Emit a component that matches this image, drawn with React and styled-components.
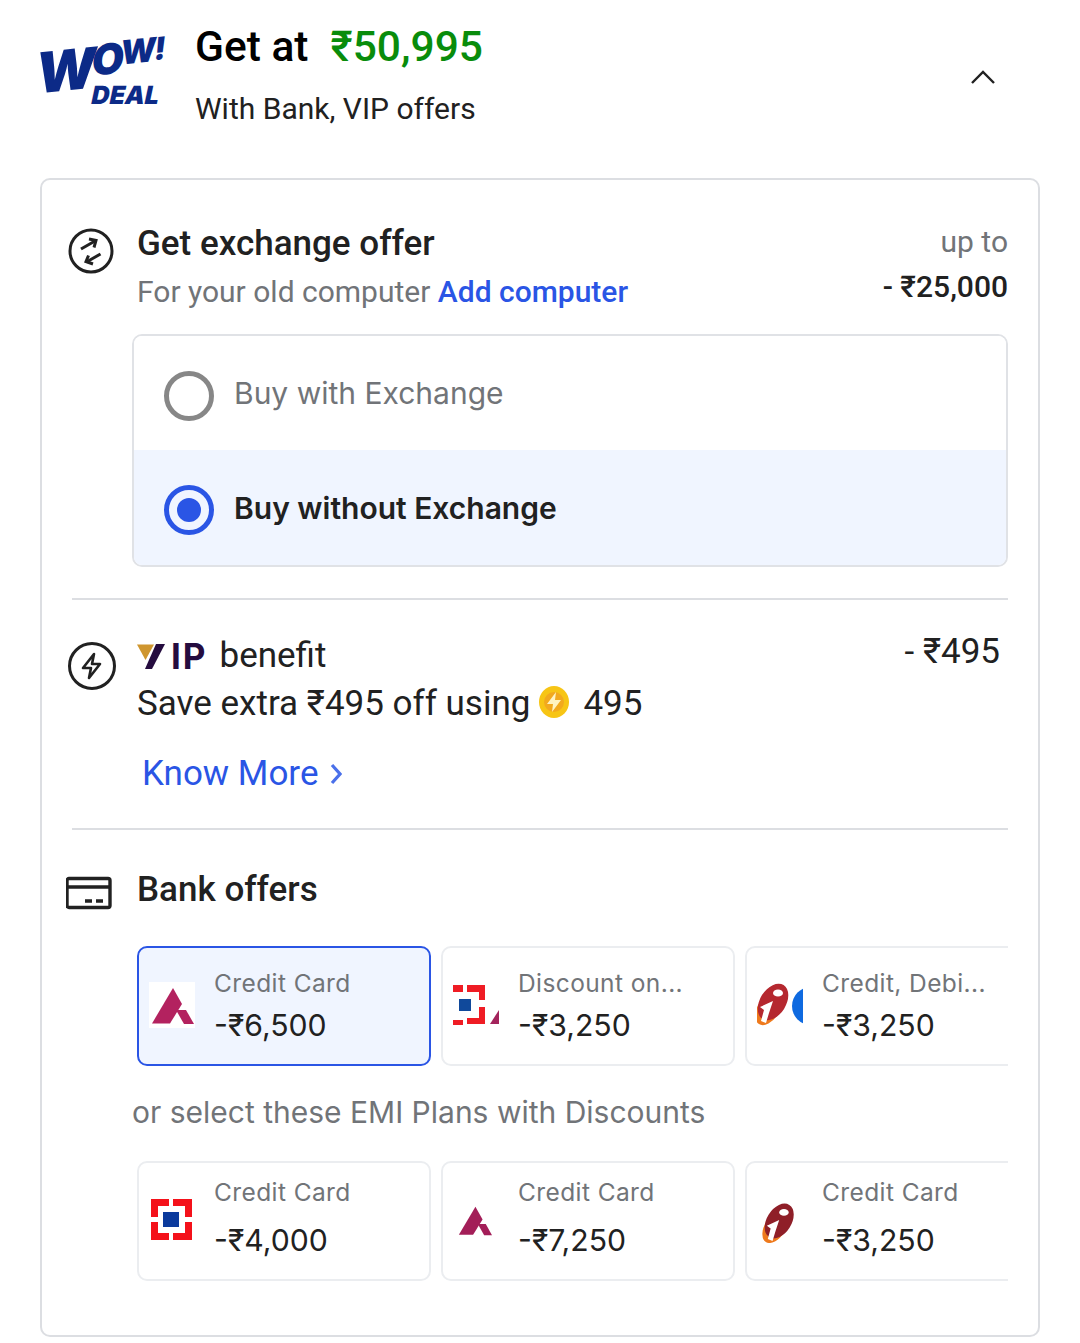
import styled, { createGlobalStyle } from "styled-components";

const Global = createGlobalStyle`
  body {
    margin: 0;
    background: #fff;
    font-family: Roboto, "Liberation Sans", sans-serif;
  }
`;

const Page = styled.div`
  width: 1080px;
  height: 1343px;
  overflow: hidden;
`;

const Header = styled.header`
  height: 178px;
  display: flex;
  padding-left: 40px;
  padding-right: 84px;
  box-sizing: border-box;
`;

const Logo = styled.div`
  width: 155px;
  flex: none;
  padding-top: 36px;
  color: #0c2a87;
  font-family: Inter, sans-serif;
  font-weight: 900;
`;

const LogoWow = styled.div`
  display: flex;
  align-items: flex-start;
  height: 50px;
  transform: rotate(-6deg) skewX(-12deg);
  transform-origin: left top;
  margin-top: 9px;
`;

const LogoChar = styled.span`
  font-size: ${(p) => p.$size}px;
  line-height: ${(p) => p.$size}px;
  margin-right: ${(p) => p.$gap}px;
`;

const LogoDeal = styled.div`
  font-size: 25px;
  line-height: 24px;
  margin-top: -12px;
  margin-left: 52px;
  transform: skewX(-12deg);
`;

const HeaderText = styled.div`
  flex: 1;
  padding-top: 23px;
`;

const Title = styled.div`
  display: flex;
  gap: 22px;
  font-size: 42.5px;
  line-height: 48px;
  font-weight: 500;
  color: #000;
`;

const Price = styled.span`
  color: #098c0b;
`;

const Sub = styled.div`
  margin-top: 20px;
  font-size: 30px;
  line-height: 36px;
  color: #212121;
`;

const Collapse = styled.div`
  padding-top: 69px;
  color: #212121;
`;

const Panel = styled.section`
  width: 1000px;
  height: 1159px;
  margin-left: 40px;
  box-sizing: border-box;
  border: 2px solid #dcdee2;
  border-radius: 10px;
  padding: 0 30px;
`;

const Row = styled.div`
  display: flex;
  padding-top: ${(p) => p.$top}px;
`;

const IconCell = styled.div`
  width: 65px;
  flex: none;
  padding-top: ${(p) => p.$top || 0}px;
  margin-left: ${(p) => p.$left || -5}px;
  margin-right: ${(p) => -(p.$left || -5)}px;
  color: #212121;
`;

const Main = styled.div`
  flex: 1;
`;

const Heading = styled.div`
  font-size: 35px;
  line-height: 44px;
  font-weight: 500;
  color: #212121;
`;

const SubLine = styled.div`
  font-size: 30px;
  line-height: 40px;
  margin-top: 6px;
  color: #717478;
`;

const Link = styled.span`
  color: #2a55e5;
  font-weight: 500;
`;

const Side = styled.div`
  text-align: right;
  flex: none;
`;

const UpTo = styled.div`
  font-size: 30px;
  line-height: 40px;
  color: #717478;
`;

const SideValue = styled.div`
  font-size: 30px;
  line-height: 40px;
  margin-top: 5px;
  font-weight: 500;
  color: #212121;
`;

const Options = styled.div`
  margin: 22px 0 31px 60px;
  border: 2px solid #e0e2e6;
  border-radius: 10px;
  overflow: hidden;
`;

const Option = styled.div`
  height: ${(p) => p.$h}px;
  display: flex;
  align-items: center;
  gap: 20px;
  padding-left: 30px;
  background: ${(p) => (p.$on ? "#f0f5ff" : "#fff")};
  font-family: Inter, sans-serif;
  font-size: 30px;
  font-weight: ${(p) => (p.$on ? 600 : 400)};
  color: ${(p) => (p.$on ? "#212121" : "#717478")};
`;

const Radio = styled.span`
  width: 50px;
  height: 50px;
  margin-top: 5px;
  box-sizing: border-box;
  border-radius: 50%;
  flex: none;
  border: 5px solid ${(p) => (p.$on ? "#2a55e5" : "#878787")};
  display: flex;
  align-items: center;
  justify-content: center;
  &::after {
    content: "";
    width: 24px;
    height: 24px;
    border-radius: 50%;
    background: ${(p) => (p.$on ? "#2a55e5" : "transparent")};
  }
`;

const Divider = styled.hr`
  margin: 0;
  border: 0;
  height: 2px;
  background: #dcdee2;
`;

const VipTitle = styled.div`
  display: flex;
  align-items: center;
  gap: 12px;
  font-size: 35px;
  line-height: 48px;
  color: #212121;
`;

const VipMark = styled.span`
  display: inline-flex;
  align-items: center;
  gap: 6px;
  font-family: Inter, sans-serif;
  font-size: 35px;
  line-height: 30px;
  font-weight: 700;
  letter-spacing: 2px;
  color: #250c3f;
`;

const SaveLine = styled.div`
  display: flex;
  align-items: center;
  font-size: 35px;
  line-height: 48px;
  color: #212121;
`;

const CoinWrap = styled.span`
  display: inline-flex;
  margin: -4px 14px 0 9px;
`;

const KnowMore = styled.div`
  display: flex;
  align-items: center;
  gap: 12px;
  margin: 22px 0 30px 5px;
  font-size: 35px;
  line-height: 48px;
  color: #2a55e5;
`;

const Amount = styled.div`
  font-size: 35px;
  line-height: 44px;
  color: #212121;
  margin: -2px 8px 0 0;
`;

const Offers = styled.div`
  display: flex;
  gap: 10px;
  margin-left: 65px;
  margin-top: ${(p) => p.$top}px;
  overflow: hidden;
`;

const Offer = styled.div`
  flex: none;
  width: 294px;
  height: 120px;
  box-sizing: border-box;
  display: flex;
  gap: 19px;
  padding-left: 10px;
  border: 2px solid ${(p) => (p.$on ? "#2a55e5" : "#ebedf0")};
  border-radius: 10px;
  background: ${(p) => (p.$on ? "#f0f5ff" : "#fff")};
  font-family: Inter, sans-serif;
`;

const BankLogo = styled.div`
  width: 46px;
  height: 46px;
  flex: none;
  margin-top: 34px;
  overflow: hidden;
  background: #fff;
`;

const OfferText = styled.div`
  padding-top: ${(p) => p.$top}px;
  min-width: 0;
`;

const OfferLabel = styled.div`
  font-size: 24.5px;
  line-height: 34px;
  letter-spacing: 0.4px;
  color: #717478;
  white-space: nowrap;
`;

const OfferValue = styled.div`
  font-size: 30.2px;
  line-height: 40px;
  margin-top: ${(p) => p.$gap}px;
  color: #212121;
  white-space: nowrap;
`;

const EmiNote = styled.div`
  margin: 28px 0 31px 60px;
  font-family: Inter, sans-serif;
  font-size: 30px;
  line-height: 36px;
  color: #717478;
`;

function Chevron() {
  return (
    <svg width="26" height="16" viewBox="0 0 26 16" fill="none" stroke="currentColor" strokeWidth="2.4">
      <path d="M2 14 L13 3 L24 14" />
    </svg>
  );
}

function ExchangeIcon() {
  return (
    <svg width="48" height="46" viewBox="0 0 48 46" fill="none" stroke="#212121" strokeWidth="3">
      <circle cx="24" cy="23" r="21" />
      <path d="M14 21 L28 13" />
      <path d="M22 11 L29 12.5 L27 19.5" />
      <path d="M33.5 26 L19.5 34" />
      <path d="M21.5 27.5 L19 33.5 L26 36" />
    </svg>
  );
}

function BoltIcon() {
  return (
    <svg width="50" height="50" viewBox="0 0 50 50" fill="none" stroke="#212121" strokeWidth="3">
      <circle cx="25" cy="25" r="22.5" />
      <path d="M27 13 L16 27 H24 L22 37 L33 23 H25 Z" strokeWidth="2.6" strokeLinejoin="round" />
    </svg>
  );
}

function CardIcon() {
  return (
    <svg width="46" height="34" viewBox="0 0 46 34" fill="none" stroke="#212121" strokeWidth="3.4">
      <rect x="1" y="2.5" width="43" height="29" rx="2" />
      <path d="M1.5 11 H43.5" />
      <path d="M19 25 H26 M30 25 H37" />
    </svg>
  );
}

function VipV() {
  return (
    <svg width="28" height="25" viewBox="0 0 28 25">
      <polygon points="0,0.5 17,0.5 8.5,16" fill="#cf962f" />
      <polygon points="19,0 28,0 15,25 8,25" fill="#250c3f" />
    </svg>
  );
}

function Coin() {
  return (
    <svg width="30" height="32" viewBox="0 0 30 32">
      <ellipse cx="15" cy="16" rx="15" ry="16" fill="#f7c515" />
      <circle cx="15" cy="16" r="10" fill="#f2a91e" />
      <path d="M17 6 L8 18 H14 L13 26 L22 14 H16 Z" fill="#fff3c2" />
    </svg>
  );
}

function ChevronRight() {
  return (
    <svg width="12" height="22" viewBox="0 0 12 22" fill="none" stroke="#4a70ea" strokeWidth="3.2">
      <path d="M2 2 L10 11 L2 20" />
    </svg>
  );
}

function AxisLogo({ small }) {
  return (
    <svg width="46" height="46" viewBox="0 0 46 46">
      <g transform={small ? "translate(3.5 5) scale(.79)" : undefined} fill={small ? "#a31e58" : "#b3225f"}>
        <polygon points="24,6 33,22 21,41.5 3,41.5" />
        <polygon points="27,28 37,28 45,42 35,42" />
      </g>
    </svg>
  );
}

function HdfcCut() {
  return (
    <svg width="46" height="46" viewBox="0 0 46 46">
      <path d="M0 3 H10 V10 H0 Z M0 38 H10 V43 H0 Z" fill="#ef1c24" />
      <path d="M14 3 H32 V18 H26 V10 H14 Z M26 25 H32 V42 H14 V36 H26 Z" fill="#ef1c24" />
      <rect x="6" y="17" width="12" height="12" fill="#10499b" />
      <polygon points="37,42 46,28 46,42" fill="#a3245c" />
    </svg>
  );
}

function HdfcLogo() {
  return (
    <svg width="46" height="46" viewBox="0 0 46 46">
      <path d="M2 2 H20 V9 H9 V20 H2 Z M24 2 H43 V20 H36 V9 H24 Z M2 25 H9 V36 H20 V43 H2 Z M36 25 H43 V43 H24 V36 H36 Z" fill="#f4111a" />
      <rect x="14" y="15" width="16" height="15" fill="#0b3a9c" />
    </svg>
  );
}

function IciciLogo({ second }) {
  return (
    <svg width="46" height="46" viewBox="0 0 46 46">
      <g transform={second ? undefined : "translate(7 5) scale(.95)"}>
        <ellipse cx="12" cy="26" rx="11" ry="19" transform="rotate(32 12 26)" fill="#ee7a1d" />
        <ellipse cx="16" cy="20" rx="13" ry="20" transform="rotate(32 16 20)" fill={second ? "#b5282f" : "#8f1f28"} />
        <ellipse cx="21" cy="11" rx="5" ry="3.6" fill="#fff" />
        <path d="M3 25 L16 19 L12 31 L9 41 L4 39 L7 28 Z" fill="#fff" />
      </g>
      {second && <circle cx="54" cy="24" r="19" fill="#0f6ae0" />}
    </svg>
  );
}

export default function App() {
  return (
    <Page>
      <Global />
      <Header>
        <Logo>
          <LogoWow>
            <LogoChar $size={56} $gap={-6}>W</LogoChar>
            <LogoChar $size={42} $gap={-4}>O</LogoChar>
            <LogoChar $size={33} $gap={-2}>W</LogoChar>
            <LogoChar $size={31} $gap={0}>!</LogoChar>
          </LogoWow>
          <LogoDeal>DEAL</LogoDeal>
        </Logo>
        <HeaderText>
          <Title>
            <span>Get at</span>
            <Price>₹50,995</Price>
          </Title>
          <Sub>With Bank, VIP offers</Sub>
        </HeaderText>
        <Collapse>
          <Chevron />
        </Collapse>
      </Header>

      <Panel>
        <Row $top={42}>
          <IconCell $top={6}>
            <ExchangeIcon />
          </IconCell>
          <Main>
            <Heading>Get exchange offer</Heading>
            <SubLine>
              For your old computer <Link>Add computer</Link>
            </SubLine>
          </Main>
          <Side>
            <UpTo>up to</UpTo>
            <SideValue>- ₹25,000</SideValue>
          </Side>
        </Row>
        <Options>
          <Option $h={114}>
            <Radio />
            Buy with Exchange
          </Option>
          <Option $on $h={115}>
            <Radio $on />
            Buy without Exchange
          </Option>
        </Options>
        <Divider />

        <Row $top={32}>
          <IconCell $top={9}>
            <BoltIcon />
          </IconCell>
          <Main>
            <VipTitle>
              <VipMark>
                <VipV />
                IP
              </VipMark>
              benefit
            </VipTitle>
            <SaveLine>
              Save extra ₹495 off using
              <CoinWrap>
                <Coin />
              </CoinWrap>
              495
            </SaveLine>
            <KnowMore>
              Know More
              <ChevronRight />
            </KnowMore>
          </Main>
          <Side>
            <Amount>- ₹495</Amount>
          </Side>
        </Row>
        <Divider />

        <Row $top={38}>
          <IconCell $top={8} $left={-6}>
            <CardIcon />
          </IconCell>
          <Main>
            <Heading>Bank offers</Heading>
          </Main>
        </Row>

        <Offers $top={32}>
          <Offer $on>
            <BankLogo>
              <AxisLogo />
            </BankLogo>
            <OfferText $top={18}>
              <OfferLabel>Credit Card</OfferLabel>
              <OfferValue $gap={5}>-₹6,500</OfferValue>
            </OfferText>
          </Offer>
          <Offer>
            <BankLogo>
              <HdfcCut />
            </BankLogo>
            <OfferText $top={18}>
              <OfferLabel>Discount on...</OfferLabel>
              <OfferValue $gap={5}>-₹3,250</OfferValue>
            </OfferText>
          </Offer>
          <Offer>
            <BankLogo>
              <IciciLogo second />
            </BankLogo>
            <OfferText $top={18}>
              <OfferLabel>Credit, Debi...</OfferLabel>
              <OfferValue $gap={5}>-₹3,250</OfferValue>
            </OfferText>
          </Offer>
        </Offers>

        <EmiNote>or select these EMI Plans with Discounts</EmiNote>

        <Offers $top={0}>
          <Offer>
            <BankLogo>
              <HdfcLogo />
            </BankLogo>
            <OfferText $top={12}>
              <OfferLabel>Credit Card</OfferLabel>
              <OfferValue $gap={11}>-₹4,000</OfferValue>
            </OfferText>
          </Offer>
          <Offer>
            <BankLogo>
              <AxisLogo small />
            </BankLogo>
            <OfferText $top={12}>
              <OfferLabel>Credit Card</OfferLabel>
              <OfferValue $gap={11}>-₹7,250</OfferValue>
            </OfferText>
          </Offer>
          <Offer>
            <BankLogo>
              <IciciLogo />
            </BankLogo>
            <OfferText $top={12}>
              <OfferLabel>Credit Card</OfferLabel>
              <OfferValue $gap={11}>-₹3,250</OfferValue>
            </OfferText>
          </Offer>
        </Offers>
      </Panel>
    </Page>
  );
}
